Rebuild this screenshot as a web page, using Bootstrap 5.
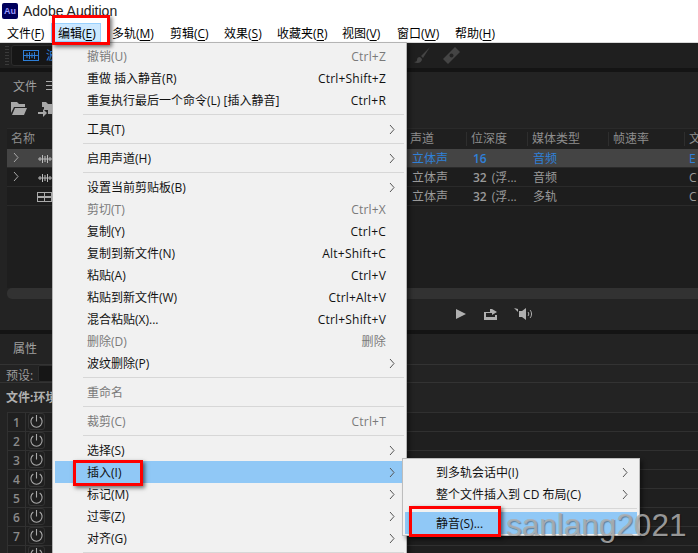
<!DOCTYPE html>
<html lang="zh"><head><meta charset="utf-8"><title>Adobe Audition</title>
<link href="https://cdn.jsdelivr.net/npm/bootstrap@5.3.0/dist/css/bootstrap.min.css" rel="stylesheet">
<style>
html,body{height:553px;overflow:hidden;background:#111}
body{font:12px/1 "Open Sans","Noto Sans CJK SC",sans-serif;color:#000}
.stage{position:relative;width:698px;height:553px;overflow:hidden}
.titlebar{height:22px;background:#fff;padding-left:2px;gap:5px;font:14px "Liberation Sans","Noto Sans CJK SC",sans-serif;color:#222}
.aulogo{width:16px;height:16px;background:#00005b;color:#9a9aff;font:bold 9px/16px "Liberation Sans",sans-serif;text-align:center;border-radius:2px}
.menubar{height:20px;background:#fff}
.mtop{padding:2px 0 0 6px;height:19px;line-height:16px;white-space:nowrap;border:1px solid transparent;margin-top:1px}
.mtop:nth-child(1){width:51px}.mtop:nth-child(2){width:50px;margin-right:4px}.mtop:nth-child(3){width:58px}.mtop:nth-child(4){width:54px}.mtop:nth-child(5){width:53px}.mtop:nth-child(6){width:65px}.mtop:nth-child(7){width:55px}.mtop:nth-child(8){width:58px}
.mtop.on{background:#cce8ff;border-color:#99d1ff}
.mtop u{text-underline-offset:2px}
.darkapp{height:511px;background:#141414;border-top:1px solid #d9d9d9}
.toolb{height:25px;background:#1f1f1f;padding-left:5px}
.grip{width:4px;height:19px;margin-right:2px;background:repeating-linear-gradient(#3a3a3a 0 1px,transparent 1px 3px)}
.tbtn{width:60px;height:21px;background:#161616;border:1px solid #2c2c2c;border-radius:3px;gap:7px;padding-left:11px;color:#2f80d8;white-space:nowrap;overflow:hidden;flex:none}
.tools{margin-left:343px;gap:12px}
.gapb{height:4px}
.pane1{height:258px;background:#232323}
.gapc{height:4px}
.pane2{height:219px;background:#232323}
.ptitle{color:#a0a0a0;height:29px;padding:9px 0 0 13px;gap:9px}
.burger{width:10px;height:9px;border-top:1px solid #aaa;border-bottom:1px solid #aaa;position:relative}
.burger::after{content:"";position:absolute;left:0;right:0;top:3px;height:1px;background:#aaa}
.picons{height:27px;padding-left:11px;gap:11px}
.fh{height:21px;color:#8e8e8e;background:#1f1f1f;position:relative;margin-left:7px;border-top:1px solid #2a2a2a}
.fh span,.fr span{position:absolute;top:4px;white-space:nowrap}
.fh em{position:absolute;top:3px;width:1px;height:14px;background:#2e2e2e}
.fr{height:19px;background:#1d1d1d;border-bottom:1px solid #2a2a2a;color:#9a9a9a;position:relative;margin-left:7px}
.fr svg{position:absolute;color:#a8a8a8}
.fr b{font-weight:600;margin-right:5px}
.fr.sel{background:#444;color:#2f80d8}
.fblank{height:82px;background:#1e1e1e;margin-left:7px}
.sbar{height:11px;background:#323232;margin-left:7px;border-radius:5px 0 0 5px}
.trans{height:33px;padding-left:455px;padding-top:8px;gap:16px}
.fx,.preset{position:relative}
.ptitle2{height:31px;color:#a0a0a0;padding:9px 0 0 13px;border-bottom:1px solid #333}
.preset{color:#9a9a9a;padding-left:6px;height:18px;line-height:22px;border-bottom:1px solid #333;gap:5px}
.pbox{width:30px;height:17px;background:#161616;border:1px solid #2c2c2c;border-radius:2px;flex:none;color:#8a8a8a;padding-left:13px;line-height:15px}
.fx{color:#b0b0b0;font-weight:700;padding-left:6px;height:29px;line-height:30px;white-space:nowrap}
.frow{height:19px;border-top:1px solid #303030;background:#1f1f1f;color:#8a8a8a;margin-left:7px;line-height:20px;border-left:1px solid #303030}
.frow i{font-style:normal;width:18px;text-align:center;font-weight:600;border-right:1px solid #303030;flex:none}
.pwr{width:17px;height:17px;margin:0 0 0 2px;border:1px solid #333;border-radius:3px;flex:none;line-height:0}
.menu{position:absolute;background:#f1f1f1;border:1px solid #b4b4b4;box-shadow:3px 3px 4px rgba(0,0,0,.4);padding:2px}
.m1{left:52px;top:42px;width:355px;height:530px}
.m2{left:402px;top:458px;width:238px;height:78px;border-color:#bdbdbd}
.mi{height:22px;padding:1px 18px 0 32px;display:flex;justify-content:space-between;align-items:center;white-space:nowrap;color:#111}
.m2 .mi{padding-left:31px}
.mi.dis{color:#7a7a7a}
.mi.hot{background:#90c8f6}
.msep{height:1px;background:#d7d7d7;margin:3px 0 3px 28px}
.sc{letter-spacing:.2px}
.chev{width:6px;height:11px;margin-right:-9px;color:#555}
.flag{position:absolute;border:3px solid #f00;box-shadow:2px 2px 4px rgba(0,0,0,.55)}
.f1{left:52px;top:15px;width:58px;height:30px}
.f2{left:73px;top:460px;width:70px;height:26px}
.f3{left:409px;top:506px;width:92px;height:31px}
.wm{position:absolute;left:506px;top:510px;font:31.5px/1 "Liberation Sans",sans-serif;color:rgba(175,175,175,.85);text-shadow:1px 1px 1px rgba(0,0,0,.35);white-space:nowrap}
</style></head><body>
<svg width="0" height="0" class="position-absolute"><defs>
<symbol id="chv" viewBox="0 0 6 11"><path d="M1 1l4 4.5-4 4.5" fill="none" stroke="currentColor" stroke-width="1"/></symbol>
<symbol id="pw" viewBox="0 0 15 15"><path d="M4.3 3a5.6 5.6 0 1 0 6.4 0M7.5 1v6.5" stroke="#aaa" fill="none" stroke-width="1.1"/></symbol>
<symbol id="wav" viewBox="0 0 14 10"><path d="M0 5h14M2 3v4M4.5 1v8M7 2v6M9.5 1v8M12 3v4" stroke="#bbb" fill="none"/></symbol>
</defs></svg>
<div class="stage">
<div class="titlebar d-flex align-items-center"><div class="aulogo">Au</div><div>Adobe Audition</div></div>
<div class="menubar d-flex">
<div class="mtop">文件(<u>F</u>)</div><div class="mtop on">编辑(<u>E</u>)</div><div class="mtop">多轨(<u>M</u>)</div><div class="mtop">剪辑(<u>C</u>)</div><div class="mtop">效果(<u>S</u>)</div><div class="mtop">收藏夹(<u>R</u>)</div><div class="mtop">视图(<u>V</u>)</div><div class="mtop">窗口(<u>W</u>)</div><div class="mtop">帮助(<u>H</u>)</div>
</div>
<div class="darkapp">
<div class="toolb d-flex align-items-center">
<div class="grip"></div>
<div class="tbtn d-flex align-items-center"><svg width="16" height="11" viewBox="0 0 16 11" class="flex-none"><rect x=".5" y=".5" width="15" height="10" fill="none" stroke="#2f80d8"/><path d="M1 5.5h14M4 3v5M6.5 2v7M9 3v5M11.5 2v7" stroke="#2f80d8"/></svg><span>波形</span></div>
<div class="tools d-flex">
<svg width="17" height="17" viewBox="0 0 17 17"><path d="M16 0L7 9l2 2zM6 10c-2 0-3 1-3 3 0 1-1 2-3 2 3 2 8 1 8-3z" fill="#444"/></svg>
<svg width="17" height="17" viewBox="0 0 17 17"><path d="M12 0l5 5L5 17l-5-5z" fill="#444"/><circle cx="8.5" cy="8.5" r="2" fill="#222"/></svg>
</div>
</div>
<div class="gapb"></div>
<div class="pane1">
<div class="ptitle d-flex"><span>文件</span><span class="burger"></span></div>
<div class="picons d-flex align-items-start">
<svg width="16" height="14" viewBox="0 0 16 14"><path d="M0 1h6l2 2h6v3H3L0 12zM4 7h12l-3 7H1z" fill="#a8a8a8"/></svg>
<svg width="20" height="17" viewBox="0 0 20 17"><path d="M4 1h4l2 2h10v10H10V9H6V6H4z" fill="#a8a8a8"/><path d="M0 11h5V8l4 4-4 4v-3H0z" fill="#a8a8a8"/></svg>
</div>
<div class="fh"><span style="left:4px">名称</span><em style="left:398px"></em><span style="left:403px">声道</span><em style="left:459px"></em><span style="left:464px">位深度</span><em style="left:520px"></em><span style="left:525px">媒体类型</span><em style="left:601px"></em><span style="left:606px">帧速率</span><em style="left:677px"></em><span style="left:682px">文</span></div>
<div class="fr sel"><svg style="left:6px;top:3px" width="6" height="11"><use href="#chv"/></svg><svg style="left:31px;top:5px" width="14" height="10"><use href="#wav"/></svg><span style="left:405px">立体声</span><span style="left:466px"><b>16</b></span><span style="left:526px">音频</span><span style="left:682px">E</span></div>
<div class="fr"><svg style="left:6px;top:3px" width="6" height="11"><use href="#chv"/></svg><svg style="left:31px;top:5px" width="14" height="10"><use href="#wav"/></svg><span style="left:405px">立体声</span><span style="left:466px"><b>32</b>(浮...</span><span style="left:526px">音频</span><span style="left:682px">C</span></div>
<div class="fr"><svg style="left:30px;top:5px" width="15" height="10" viewBox="0 0 15 10"><path d="M0 0h15v10H0zM1 1v3h6V1zm7 0v3h6V1zM1 6v3h6V6zm7 0v3h6V6z" fill="#aaa" fill-rule="evenodd"/></svg><span style="left:405px">立体声</span><span style="left:466px"><b>32</b>(浮...</span><span style="left:526px">多轨</span><span style="left:682px">C</span></div>
<div class="fblank"></div>
<div class="sbar"></div>
<div class="trans d-flex">
<svg width="12" height="14" viewBox="0 0 12 14"><path d="M1 2v10l10-5z" fill="#b0b0b0"/></svg>
<svg width="15" height="14" viewBox="0 0 15 14"><path d="M1 5h6V2h2l5 3-5 3V6H3v4h9V8h2v5H1z" fill="#b0b0b0"/></svg>
<svg width="21" height="14" viewBox="0 0 21 14"><path d="M0 1l4 1v3zM5 4h3l4-3v12l-4-3H5z" fill="#b0b0b0"/><path d="M14 5c1 1 1 3 0 4M16 3c2 2 2 6 0 8" stroke="#b0b0b0" fill="none"/></svg>
</div>
</div>
<div class="gapc"></div>
<div class="pane2">
<div class="ptitle2">属性</div>
<div class="preset d-flex"><span>预设:</span><span class="pbox">(</span></div>
<div class="fx">文件:环境</div>
<div class="frow d-flex"><i>1</i><span class="pwr"><svg width="15" height="15"><use href="#pw"/></svg></span></div>
<div class="frow d-flex"><i>2</i><span class="pwr"><svg width="15" height="15"><use href="#pw"/></svg></span></div>
<div class="frow d-flex"><i>3</i><span class="pwr"><svg width="15" height="15"><use href="#pw"/></svg></span></div>
<div class="frow d-flex"><i>4</i><span class="pwr"><svg width="15" height="15"><use href="#pw"/></svg></span></div>
<div class="frow d-flex"><i>5</i><span class="pwr"><svg width="15" height="15"><use href="#pw"/></svg></span></div>
<div class="frow d-flex"><i>6</i><span class="pwr"><svg width="15" height="15"><use href="#pw"/></svg></span></div>
<div class="frow d-flex"><i>7</i><span class="pwr"><svg width="15" height="15"><use href="#pw"/></svg></span></div>
<div class="frow d-flex"><i></i><span class="pwr"><svg width="15" height="15"><use href="#pw"/></svg></span></div>
</div>
</div>
<div class="menu m1">
<div class="mi dis"><span>撤销(U)</span><span class="sc">Ctrl+Z</span></div>
<div class="mi"><span>重做 插入静音(R)</span><span class="sc">Ctrl+Shift+Z</span></div>
<div class="mi"><span>重复执行最后一个命令(L) [插入静音]</span><span class="sc">Ctrl+R</span></div>
<div class="msep"></div>
<div class="mi"><span>工具(T)</span><svg class="chev"><use href="#chv"/></svg></div>
<div class="msep"></div>
<div class="mi"><span>启用声道(H)</span><svg class="chev"><use href="#chv"/></svg></div>
<div class="msep"></div>
<div class="mi"><span>设置当前剪贴板(B)</span><svg class="chev"><use href="#chv"/></svg></div>
<div class="mi dis"><span>剪切(T)</span><span class="sc">Ctrl+X</span></div>
<div class="mi"><span>复制(Y)</span><span class="sc">Ctrl+C</span></div>
<div class="mi"><span>复制到新文件(N)</span><span class="sc">Alt+Shift+C</span></div>
<div class="mi"><span>粘贴(A)</span><span class="sc">Ctrl+V</span></div>
<div class="mi"><span>粘贴到新文件(W)</span><span class="sc">Ctrl+Alt+V</span></div>
<div class="mi"><span>混合粘贴(X)...</span><span class="sc">Ctrl+Shift+V</span></div>
<div class="mi dis"><span>删除(D)</span><span class="sc">删除</span></div>
<div class="mi"><span>波纹删除(P)</span><svg class="chev"><use href="#chv"/></svg></div>
<div class="msep"></div>
<div class="mi dis"><span>重命名</span></div>
<div class="msep"></div>
<div class="mi dis"><span>裁剪(C)</span><span class="sc">Ctrl+T</span></div>
<div class="msep"></div>
<div class="mi"><span>选择(S)</span><svg class="chev"><use href="#chv"/></svg></div>
<div class="mi hot"><span>插入(I)</span><svg class="chev"><use href="#chv"/></svg></div>
<div class="mi"><span>标记(M)</span><svg class="chev"><use href="#chv"/></svg></div>
<div class="mi"><span>过零(Z)</span><svg class="chev"><use href="#chv"/></svg></div>
<div class="mi"><span>对齐(G)</span><svg class="chev"><use href="#chv"/></svg></div>
<div class="msep"></div>
</div>
<div class="menu m2">
<div class="mi"><span>到多轨会话中(I)</span><svg class="chev"><use href="#chv"/></svg></div>
<div class="mi"><span>整个文件插入到 CD 布局(C)</span><svg class="chev"><use href="#chv"/></svg></div>
<div class="msep"></div>
<div class="mi hot"><span>静音(S)...</span></div>
</div>
<div class="flag f1"></div>
<div class="flag f2"></div>
<div class="flag f3"></div>
<div class="wm">sanlang2021</div>
</div>
</body></html>
